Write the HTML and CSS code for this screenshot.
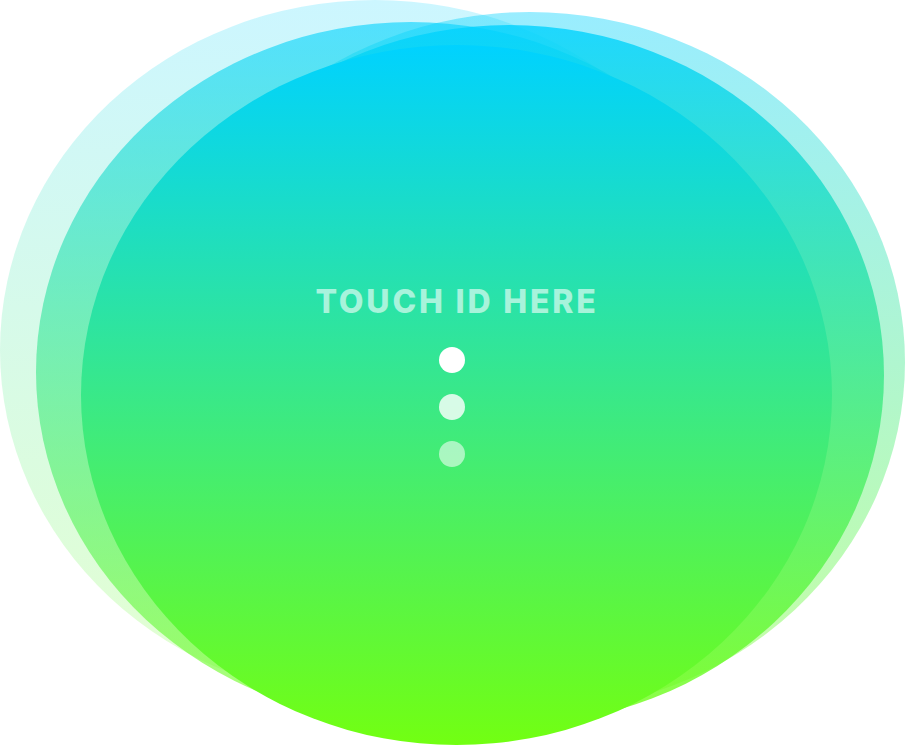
FILE: index.html
```html
<!DOCTYPE html>
<html lang="en">
<head>
<meta charset="utf-8">
<title>Touch ID</title>
<link rel="stylesheet" href="styles.css">
</head>
<body>
<main class="stage">
  <div class="blob blob-a"></div>
  <div class="blob blob-b"></div>
  <div class="blob blob-c"></div>
  <div class="blob blob-d"></div>
  <div class="blob blob-e"></div>
  <section class="prompt">
    <p class="label">TOUCH ID HERE</p>
    <div class="dots">
      <span class="dot dot-1"></span>
      <span class="dot dot-2"></span>
      <span class="dot dot-3"></span>
    </div>
  </section>
</main>
</body>
</html>
```
FILE: styles.css
```css
html, body {
  margin: 0;
  padding: 0;
  background: #ffffff;
}

.stage {
  position: relative;
  width: 905px;
  height: 745px;
  overflow: hidden;
  display: flex;
  flex-direction: column;
  align-items: center;
  box-sizing: border-box;
  padding-top: 286px;
  font-family: Inter, Roboto, sans-serif;
}

.blob {
  position: absolute;
  width: 750px;
  height: 700px;
  border-radius: 50%;
  background: linear-gradient(to bottom, #00d2ff 0%, #72ff12 100%);
}

.blob-a { left: 0;     top: 0;    opacity: 0.2; }
.blob-b { left: 155px; top: 12px; opacity: 0.4; }
.blob-c { left: 36px;  top: 22px; opacity: 0.6; }
.blob-d { left: 134px; top: 25px; opacity: 0.8; }
.blob-e { left: 81px;  top: 45px; width: 751px; opacity: 1; }

.prompt {
  position: relative;
  z-index: 1;
  display: flex;
  flex-direction: column;
  align-items: center;
}

.label {
  margin: 0;
  padding-left: 9px;
  font-size: 32px;
  line-height: 32px;
  font-weight: 800;
  letter-spacing: 2.8px;
  white-space: nowrap;
  color: rgba(255, 255, 255, 0.6);
}

.dots {
  display: flex;
  flex-direction: column;
  align-items: center;
  gap: 21px;
  margin-top: 29px;
}

.dot {
  display: block;
  width: 26px;
  height: 26px;
  border-radius: 50%;
  background: #ffffff;
}

.dot-1 { opacity: 1; }
.dot-2 { opacity: 0.8; }
.dot-3 { opacity: 0.55; }
```
